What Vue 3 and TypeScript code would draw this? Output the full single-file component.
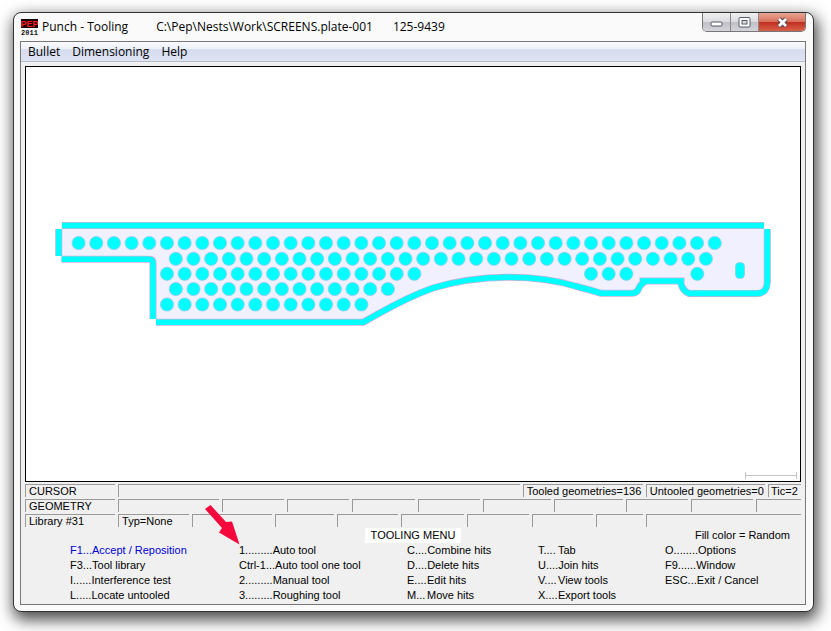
<script setup lang="ts">
interface Command {
  key: string
  label: string
  active?: boolean
  pointed?: boolean
}

interface Column {
  id: string
  commands: Command[]
}

interface Hole {
  x: number
  y: number
}

const menus: string[] = ['Bullet', 'Dimensioning', 'Help']

const columns: Column[] = [
  {
    id: 'a',
    commands: [
      { key: 'F1...', label: 'Accept / Reposition', active: true },
      { key: 'F3...', label: 'Tool library' },
      { key: 'I......', label: 'Interference test' },
      { key: 'L.....', label: 'Locate untooled' },
    ],
  },
  {
    id: 'b',
    commands: [
      { key: '1.........', label: 'Auto tool', pointed: true },
      { key: 'Ctrl-1...', label: 'Auto tool one tool' },
      { key: '2.........', label: 'Manual tool' },
      { key: '3.........', label: 'Roughing tool' },
    ],
  },
  {
    id: 'c',
    commands: [
      { key: 'C....', label: 'Combine hits' },
      { key: 'D....', label: 'Delete hits' },
      { key: 'E....', label: 'Edit hits' },
      { key: 'M...', label: 'Move hits' },
    ],
  },
  {
    id: 'd',
    commands: [
      { key: 'T....', label: 'Tab' },
      { key: 'U....', label: 'Join hits' },
      { key: 'V....', label: 'View tools' },
      { key: 'X....', label: 'Export tools' },
    ],
  },
  {
    id: 'e',
    commands: [
      { key: 'O........', label: 'Options' },
      { key: 'F9......', label: 'Window' },
      { key: 'ESC...', label: 'Exit / Cancel' },
    ],
  },
]

const pitch = 17.67

function run(startX: number, y: number, count: number): Hole[] {
  return Array.from({ length: count }, (_, i) => ({ x: startX + i * pitch, y }))
}

const holes: Hole[] = [
  ...run(78.6, 243, 37),
  ...run(175.8, 258.8, 31),
  ...run(167, 273.8, 15),
  ...run(591, 273.8, 3),
  ...run(697.3, 273.8, 1),
  ...run(175.8, 289, 13),
  ...run(167, 304.5, 12),
]

// Centre line of the tool hits that cut the outer profile.
const edges: string[] = [
  'M62 225.5H764',
  'M58.7 229V256',
  'M61.5 259.3H149Q153 259.3 153 263V319',
  'M156 322.3H363C384 311 402 299 433 288C480 274 535 274 575 286Q590 290 601 293.3H632Q637 293 638.5 289Q640 285 643 283V281H681V284Q683 291 689 293.4H758Q767 293 767.3 282V229',
]
</script>

<template>
  <div class="desktop">
    <main class="window">
      <header class="titlebar">
        <svg class="logo" viewBox="0 0 17 17" aria-hidden="true">
          <rect width="17" height="9" fill="#1a0000" />
          <text x="8.5" y="8" text-anchor="middle" class="logo-name">PEP</text>
          <text x="8.5" y="16" text-anchor="middle" class="logo-year">2011</text>
        </svg>
        <h1 class="title">
          <span class="app">Punch - Tooling</span>
          <span class="path">C:\Pep\Nests\Work\SCREENS.plate-001</span>
          <span>125-9439</span>
        </h1>
        <div class="controls">
          <button type="button" class="control" aria-label="Minimize">
            <svg class="minimize" width="13" height="6" viewBox="0 0 13 6"><rect x="1" y="1" width="11" height="4" rx="1" fill="#fff" stroke="#555b66" /></svg>
          </button>
          <button type="button" class="control" aria-label="Maximize">
            <svg width="13" height="11" viewBox="0 0 13 11"><rect x="1" y=".5" width="11" height="9.5" rx="1" fill="#fff" stroke="#555b66" /><rect x="4" y="3.5" width="5" height="3.5" fill="#ddd" stroke="#555b66" /></svg>
          </button>
          <button type="button" class="control close" aria-label="Close">
            <svg width="13" height="11" viewBox="0 0 13 11"><path d="M3 2L10 9M10 2L3 9" stroke="#5c4650" stroke-width="4.8" /><path d="M3 2L10 9M10 2L3 9" stroke="#fff" stroke-width="2.8" /></svg>
          </button>
        </div>
      </header>

      <div class="client">
        <nav class="menubar">
          <button v-for="menu in menus" :key="menu" type="button">{{ menu }}</button>
        </nav>

        <div class="body">
          <svg class="plate" viewBox="26 67 774 414" role="img" aria-label="Plate drawing">
            <path
              d="M62 228H765V284Q764 291 758 291H690Q684 289 683 279H641L636 290H601C560 277 540 275 510 275C460 275 430 284 362 320H156V262L150 257H62Z"
              fill="#f0f0ff"
            />
            <g fill="none" stroke="#c8b0dc" stroke-width="7">
              <path v-for="edge in edges" :key="edge" :d="edge" />
            </g>
            <g fill="none" stroke="#00ffff" stroke-width="5.6">
              <path v-for="edge in edges" :key="edge" :d="edge" />
            </g>
            <g fill="#00ffff" stroke="#9fc4ea" stroke-width=".7">
              <circle v-for="hole in holes" :key="`${hole.x}-${hole.y}`" :cx="hole.x" :cy="hole.y" r="6.6" />
              <rect x="735.5" y="262.5" width="9" height="16" rx="4" />
            </g>
            <path d="M745.5 472V479M796.5 472V479M745.5 475.5H796.5" fill="none" stroke="#c4c4c4" />
          </svg>

          <section class="status">
            <div class="row row-cursor">
              <span class="cell">CURSOR</span>
              <span class="cell"></span>
              <span class="cell">Tooled geometries=136</span>
              <span class="cell">Untooled geometries=0</span>
              <span class="cell tic">Tic=2</span>
            </div>
            <div class="row row-geometry">
              <span class="cell">GEOMETRY</span>
              <span v-for="n in 10" :key="n" class="cell"></span>
            </div>
            <div class="row row-library">
              <span class="cell">Library #31</span>
              <span class="cell">Typ=None</span>
              <span v-for="n in 8" :key="n" class="cell"></span>
            </div>
          </section>

          <section>
            <div class="heading">
              <h2 class="heading-title">TOOLING MENU</h2>
              <span class="fill">Fill color = Random</span>
            </div>
            <div class="columns">
              <div v-for="column in columns" :key="column.id" class="column" :class="`column-${column.id}`">
                <button
                  v-for="command in column.commands"
                  :key="command.key"
                  type="button"
                  class="command"
                  :class="{ active: command.active }"
                >
                  <span class="key">{{ command.key }}</span>
                  <span>{{ command.label }}</span>
                  <svg v-if="command.pointed" class="arrow" viewBox="204 504 37 41" aria-hidden="true">
                    <path d="M210.5 505L226 522L232 521.5L239.5 544.5L219 532.5L222 528L205 509Z" fill="#f5083c" />
                  </svg>
                </button>
              </div>
            </div>
          </section>
        </div>
      </div>
    </main>
  </div>
</template>

<style>
body {
  background: #fff;
}
</style>

<style scoped>
.desktop {
  box-sizing: border-box;
  padding: 12px 17px 20px 13px;
  overflow: hidden;
  color: #000;
  font-family: "Liberation Sans", Arial, sans-serif;
  font-size: 11px;
}

button {
  margin: 0;
  padding: 0;
  border: 0;
  background: none;
  color: inherit;
  font: inherit;
  text-align: left;
}

.window {
  box-sizing: border-box;
  padding: 0 7px 6px 6px;
  border: 1px solid #333;
  border-radius: 8px;
  background: #fafafa;
  box-shadow: 2px 6px 15px 2px rgba(0, 0, 0, 0.7);
}

.titlebar {
  display: flex;
  align-items: flex-start;
  height: 28px;
  font-family: "Open Sans", "Noto Sans", sans-serif;
}

.logo {
  flex: none;
  width: 17px;
  height: 17px;
  margin: 6px 4px 0 1px;
}

.logo-name {
  fill: #ff1c1c;
  font: bold 9px "Liberation Sans", sans-serif;
}

.logo-year {
  fill: #111;
  font: bold 7px "Liberation Mono", monospace;
}

.title {
  display: flex;
  flex: 1;
  min-width: 0;
  margin: 0;
  font-size: 12px;
  font-weight: 400;
  line-height: 28px;
  white-space: nowrap;
}

.app {
  margin-right: 28px;
}

.path {
  margin-right: 20px;
}

.controls {
  display: flex;
  height: 18px;
  overflow: hidden;
  border: 1px solid #777;
  border-top: 0;
  border-radius: 0 0 5px 5px;
}

.control {
  display: flex;
  align-items: center;
  justify-content: center;
  width: 28px;
  border-right: 1px solid #888;
  background: linear-gradient(#f0f0f2, #dcdce0 48%, #c0c0c6 52%, #d4d4da);
}

.minimize {
  margin-top: 4px;
}

.close {
  width: 46px;
  border-right: 0;
  background: linear-gradient(#e9a596, #d8705c 48%, #c03020 52%, #d8604a);
}

.client {
  border: 1px solid #777;
  background: #f0f0f0;
}

.menubar {
  display: flex;
  gap: 12px;
  height: 19px;
  padding-left: 7px;
  border-bottom: 1px solid #b8bccc;
  background: linear-gradient(#fafbfe, #eceff8 38%, #d6dcee 40%, #dfe4f3);
  font-family: "Open Sans", "Noto Sans", sans-serif;
  font-size: 12px;
  line-height: 19px;
}

.body {
  padding: 4px 4px 1px;
}

.plate {
  display: block;
  box-sizing: border-box;
  width: 100%;
  border: 1px solid #000;
  background: #fff;
}

.status {
  display: grid;
  gap: 2px;
  padding-top: 2px;
}

.row {
  display: grid;
  column-gap: 3px;
}

.row-cursor {
  grid-template-columns: 90fr 401fr 120fr 119fr 33fr;
}

.row-geometry {
  grid-template-columns: 90fr 101fr 62fr 62fr 62fr 62fr 68fr 69fr 62fr 62fr 45fr;
}

.row-library {
  grid-template-columns: 90fr 71fr 80fr 59fr 61fr 62fr 62fr 61fr 47fr 155fr;
}

.cell {
  box-sizing: border-box;
  min-width: 0;
  height: 13px;
  padding-left: 3px;
  border: solid #999;
  border-width: 1px 0 0 1px;
  line-height: 13px;
  white-space: nowrap;
}

.tic {
  padding-left: 2px;
}

.heading {
  display: grid;
  grid-template-columns: 1fr auto 1fr;
  height: 15px;
  margin-top: 1px;
  line-height: 15px;
}

.heading-title {
  grid-column: 2;
  margin: 0;
  padding: 0 6px;
  background: #fff;
  font-size: 11px;
  font-weight: 400;
}

.fill {
  padding-right: 11px;
  text-align: right;
}

.columns {
  display: grid;
  grid-template-columns: 169fr 168fr 131fr 127fr 136fr;
  padding-left: 45px;
}

.column {
  display: flex;
  flex-direction: column;
  align-items: flex-start;
}

.command {
  display: flex;
  position: relative;
  line-height: 15px;
  white-space: nowrap;
}

.active {
  color: #0000d8;
}

.key {
  min-width: 20px;
}

.column-b .key {
  min-width: 32px;
}

.column-e .key {
  min-width: 30px;
}

.arrow {
  position: absolute;
  top: -39px;
  left: -35px;
  width: 37px;
  height: 41px;
}
</style>
